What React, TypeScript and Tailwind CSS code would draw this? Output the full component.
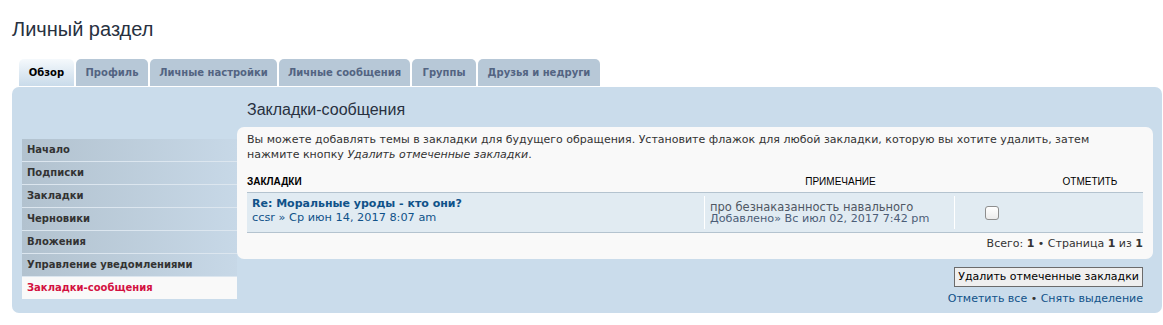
export default function App() {
  const menu = ["Начало", "Подписки", "Закладки", "Черновики", "Вложения", "Управление уведомлениями"];
  const tabs: { t: string; w: string }[] = [
    { t: "Профиль", w: "w-[72px]" },
    { t: "Личные настройки", w: "w-[127px]" },
    { t: "Личные сообщения", w: "w-[131px]" },
    { t: "Группы", w: "w-[64px]" },
    { t: "Друзья и недруги", w: "w-[122px]" },
  ];
  return (
    <div className="min-h-[325px] w-[1163px] bg-white pl-[12px] pt-[17px] font-['DejaVu_Sans',sans-serif] text-[#333]">
      <h2 className="font-['Liberation_Sans',Arial,sans-serif] text-[20px] leading-[24px] font-normal text-[#28313f]">
        Личный раздел
      </h2>
      <div className="mt-[18px] ml-[7px] flex h-[27px] gap-[2px]">
        <div className="w-[55px] rounded-t-[5px] bg-gradient-to-b from-[#f5f9fc] to-[#c9dbea] text-center text-[10px] font-bold leading-[27px] text-black">
          Обзор
        </div>
        {tabs.map((t) => (
          <div
            key={t.t}
            className={`${t.w} rounded-t-[5px] bg-[#b7c8d7] text-center text-[10px] font-bold leading-[27px] text-[#536482]`}
          >
            {t.t}
          </div>
        ))}
      </div>
      <div className="mt-[1px] flex w-[1150px] rounded-[7px] bg-[#cadceb] pl-[10px] pr-[9px] pb-[7px]">
        <div className="w-[215px] shrink-0 pt-[52px]">
          {menu.map((m) => (
            <div
              key={m}
              className="h-[23px] border-b border-[#dce6ef] bg-gradient-to-r from-[#b2c2cf] to-[#c7d8e7] pl-[5px] text-[10px] font-bold leading-[22px] text-[#333]"
            >
              {m}
            </div>
          ))}
          <div className="h-[22px] bg-[#f9f9f9] pl-[5px] text-[10px] font-bold leading-[22px] text-[#d31141]">
            Закладки-сообщения
          </div>
        </div>
        <div className="flex-1">
          <h3 className="pt-[13px] pl-[10px] font-['Liberation_Sans',Arial,sans-serif] text-[16px] leading-[20px] font-normal text-[#28313f]">
            Закладки-сообщения
          </h3>
          <div className="mt-[7px] rounded-[7px] bg-[#f9f9f9] px-[10px] pt-[5px] pb-[8px]">
            <p className="text-[11px] leading-[15px] text-[#333]">
              Вы можете добавлять темы в закладки для будущего обращения. Установите флажок для любой закладки, которую вы хотите удалить, затем
              <br />
              нажмите кнопку <i>Удалить отмеченные закладки</i>.
            </p>
            <div className="mt-[14px] flex border-b border-[#b4c3cf] pb-[4px] font-['Liberation_Sans',Arial,sans-serif] text-[10px] leading-[12px] text-black">
              <div className="flex-1 font-bold">ЗАКЛАДКИ</div>
              <div className="w-[393px] text-center">ПРИМЕЧАНИЕ</div>
              <div className="w-[106px] text-center">ОТМЕТИТЬ</div>
            </div>
            <div className="flex h-[40px] border-b border-[#b4c3cf] bg-[#e1ebf2]">
              <div className="flex-1 pl-[5px] pt-[4px]">
                <div className="text-[11px] font-bold leading-[14px] text-[#105289]">Re: Моральные уроды - кто они?</div>
                <div className="text-[11.3px] leading-[14px] text-[#105289]">ccsr » Ср июн 14, 2017 8:07 am</div>
              </div>
              <div className="my-[3px] w-[250px] border-l border-white pl-[5px] pt-[5px] leading-[12px]">
                <div className="text-[11.5px] text-[#4f5763]">про безнаказанность навального</div>
                <div className="text-[11.2px] text-[#4c5d77]">Добавлено» Вс июл 02, 2017 7:42 pm</div>
              </div>
              <div className="my-[3px] w-[189px] border-l border-white pl-[30px] pt-[10px]">
                <div className="h-[14px] w-[14px] rounded-[3px] border border-[#8e8e8e] bg-gradient-to-b from-white to-[#ececec]" />
              </div>
            </div>
            <div className="mt-[3px] text-right text-[11px] leading-[15px] text-[#333]">
              Всего: <b>1</b> • Страница <b>1</b> из <b>1</b>
            </div>
          </div>
          <div className="mt-[8px] flex justify-end pr-[10px]">
            <div className="h-[20px] border border-[#6b6b6b] bg-[#efefef] px-[3px] text-[11px] leading-[18px] text-black">
              Удалить отмеченные закладки
            </div>
          </div>
          <div className="mt-[4px] pr-[10px] text-right text-[11px] leading-[15px] text-[#105289]">
            Отметить все <span className="text-[#333]">•</span> Снять выделение
          </div>
        </div>
      </div>
    </div>
  );
}
